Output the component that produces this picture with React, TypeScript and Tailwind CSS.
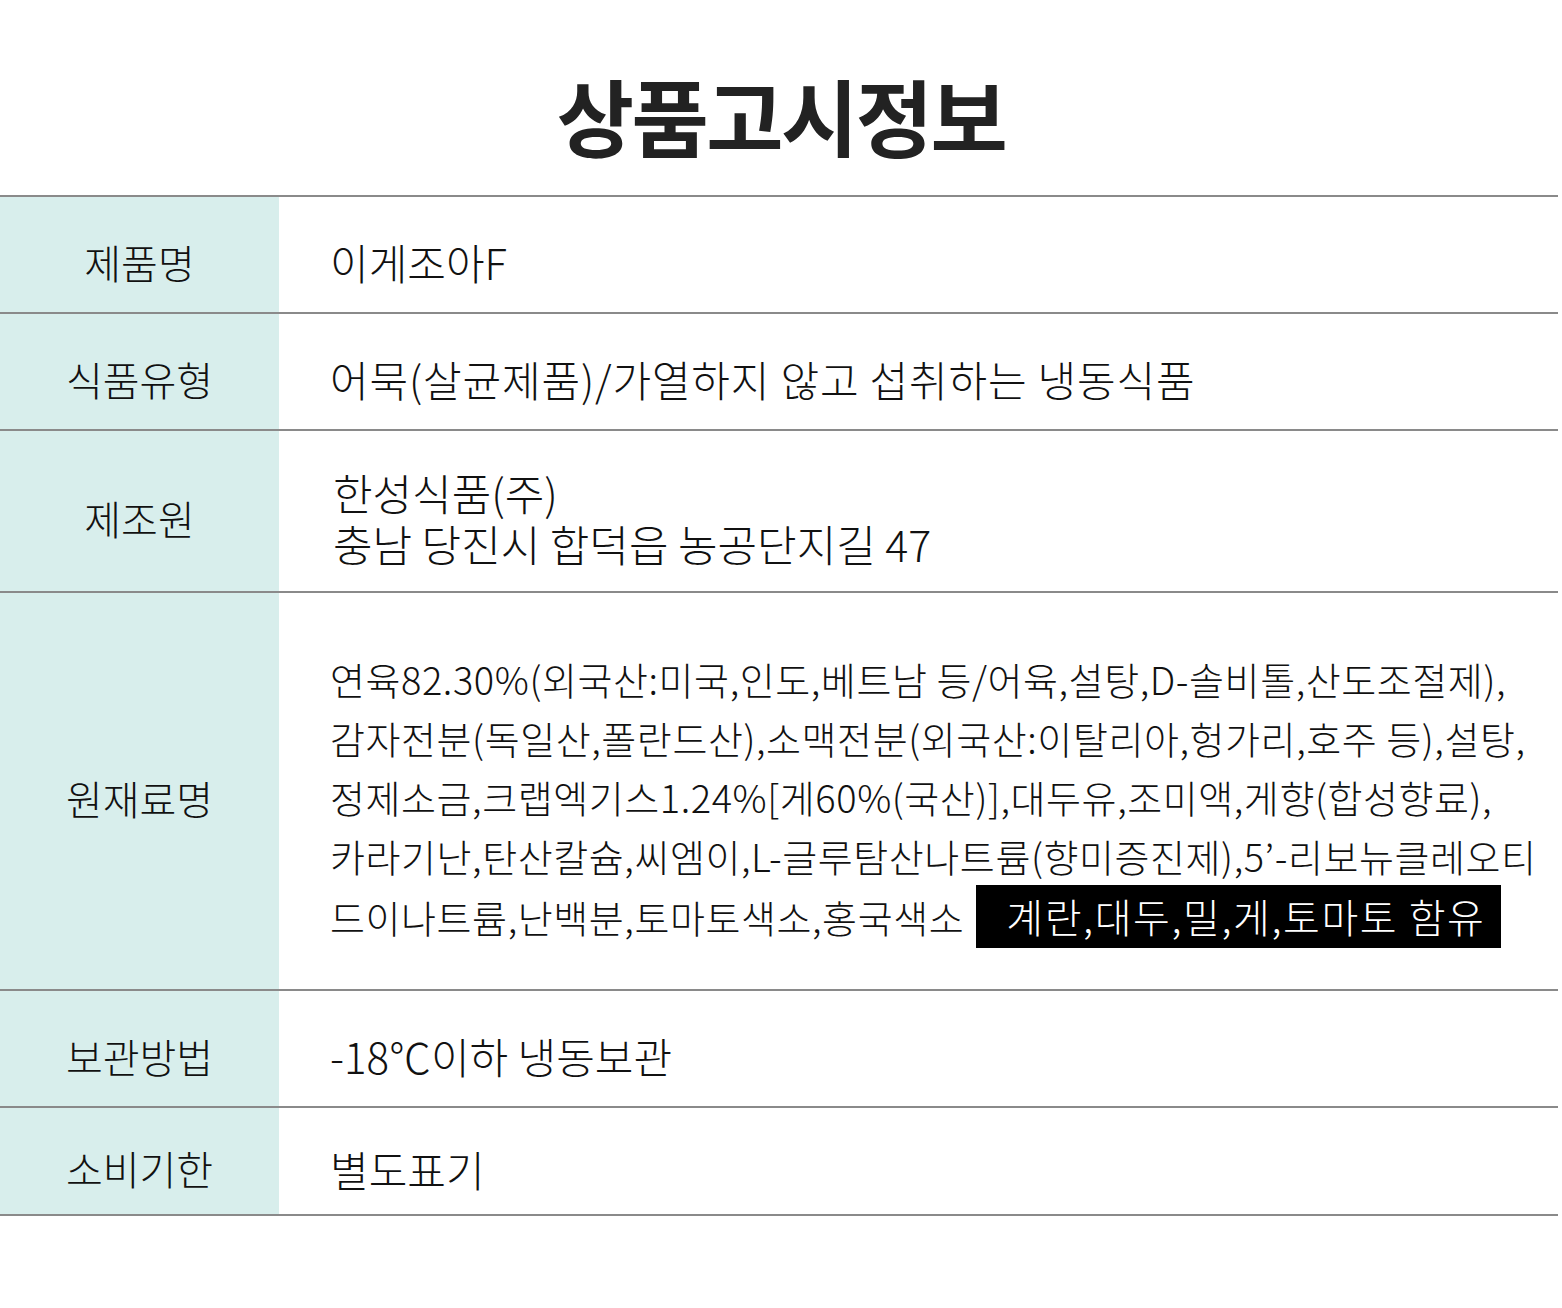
const font = { fontFamily: '"Noto Sans CJK KR", "Noto Sans", sans-serif' };

const Label = ({ children }: { children: React.ReactNode }) => (
  <div className="flex w-[279px] shrink-0 items-center justify-center bg-[#d8eeec] pt-[14px] text-[40px] font-light text-[#111]">
    {children}
  </div>
);

const Row = ({
  label,
  height,
  children,
}: {
  label: string;
  height: string;
  children: React.ReactNode;
}) => (
  <div className={`flex border-b-2 border-[#8a8a8a] ${height}`}>
    <Label>{label}</Label>
    <div className="flex flex-1 items-center pl-[51px] pt-[14px] text-[42px] font-light text-[#111]">
      {children}
    </div>
  </div>
);

const ingredientLines = [
  "연육82.30%(외국산:미국,인도,베트남 등/어육,설탕,D-솔비톨,산도조절제),",
  "감자전분(독일산,폴란드산),소맥전분(외국산:이탈리아,헝가리,호주 등),설탕,",
  "정제소금,크랩엑기스1.24%[게60%(국산)],대두유,조미액,게향(합성향료),",
  "카라기난,탄산칼슘,씨엠이,L-글루탐산나트륨(향미증진제),5’-리보뉴클레오티",
];

export default function App() {
  return (
    <div className="min-h-[1308px] w-[1562px] bg-white" style={font}>
      <h1 className="flex h-[195px] items-center justify-center pt-[34px] text-[84px] font-bold tracking-[-0.03em] text-[#222]">
        상품고시정보
      </h1>
      <div className="w-[1558px] border-t-2 border-[#8a8a8a]">
        <Row label="제품명" height="h-[117px]">
          이게조아F
        </Row>
        <Row label="식품유형" height="h-[117px]">
          <span className="tracking-[0.02em]">어묵(살균제품)/가열하지 않고 섭취하는 냉동식품</span>
        </Row>
        <Row label="제조원" height="h-[162px]">
          <div className="pl-[3px] text-[43px] leading-[51px]">
            <div>한성식품(주)</div>
            <div>충남 당진시 합덕읍 농공단지길 47</div>
          </div>
        </Row>
        <Row label="원재료명" height="h-[398px]">
          <div className="text-[38px] leading-[59px] tracking-[0.015em]">
            {ingredientLines.map((line) => (
              <div key={line} className="whitespace-nowrap">
                {line}
              </div>
            ))}
            <div className="flex items-center whitespace-nowrap">
              <span>드이나트륨,난백분,토마토색소,홍국색소</span>
              <span className="ml-[12px] flex h-[63px] w-[525px] items-center bg-black pl-[30px] text-[40px] tracking-[0.04em] text-white">
                계란,대두,밀,게,토마토 함유
              </span>
            </div>
          </div>
        </Row>
        <Row label="보관방법" height="h-[117px]">
          -18℃이하 냉동보관
        </Row>
        <Row label="소비기한" height="h-[108px]">
          별도표기
        </Row>
      </div>
    </div>
  );
}
